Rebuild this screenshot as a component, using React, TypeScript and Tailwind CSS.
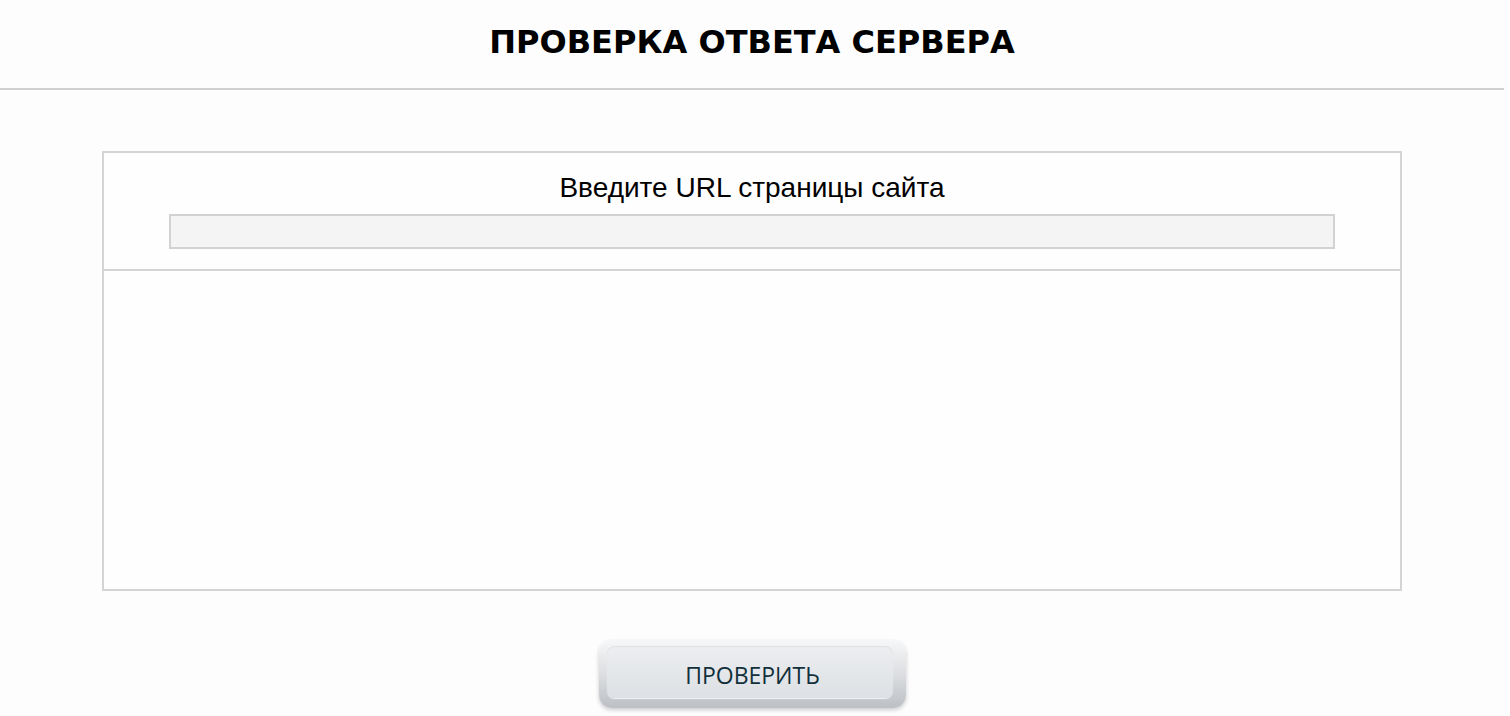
import React from 'react';

const App: React.FC = () => {
  return (
    <div className="min-h-[716px] w-[1510px] bg-[#fdfdfd]">
      <div className="w-[1504px]">
        <header className="flex h-[90px] items-center justify-center border-b-2 border-[#d0d0d0] pb-[4px]">
          <h1 className="font-['DejaVu_Sans',sans-serif] text-[32px] font-bold text-black">
            ПРОВЕРКА ОТВЕТА СЕРВЕРА
          </h1>
        </header>

        <div className="mx-[102px] mt-[61px] border-2 border-[#d4d4d4] bg-[#fefefe]">
          <div className="flex h-[118px] flex-col items-center border-b-2 border-[#d4d4d4] px-[65px] pt-[18px]">
            <label
              htmlFor="url"
              className="font-['Liberation_Sans',Arial,sans-serif] text-[28px] leading-[34px] text-black"
            >
              Введите URL страницы сайта
            </label>
            <input
              id="url"
              type="text"
              className="mt-[9px] h-[35px] w-full border-2 border-[#d2d2d2] bg-[#f4f4f5] outline-none"
            />
          </div>
          <div className="h-[318px]" />
        </div>

        <div className="mt-[49px] flex justify-center">
          <button className="flex h-[68px] w-[307px] rounded-[13px] bg-gradient-to-b from-[#f6f7f8] via-[#dcdee1] to-[#bcc0c4] pb-[10px] pl-[8px] pr-[13px] pt-[6px] shadow-[0_2px_4px_rgba(0,0,0,0.2)]">
            <span className="flex h-full w-full items-center justify-center rounded-[8px] bg-gradient-to-b from-[#eceef0] to-[#dde0e4] pl-[6px] pt-[6px] font-['Open_Sans',sans-serif] text-[23px] font-medium text-[#12303b] shadow-[0_1px_1px_rgba(255,255,255,0.8),inset_0_1px_1px_rgba(0,0,0,0.06)]">
              ПРОВЕРИТЬ
            </span>
          </button>
        </div>
      </div>
    </div>
  );
};

export default App;
